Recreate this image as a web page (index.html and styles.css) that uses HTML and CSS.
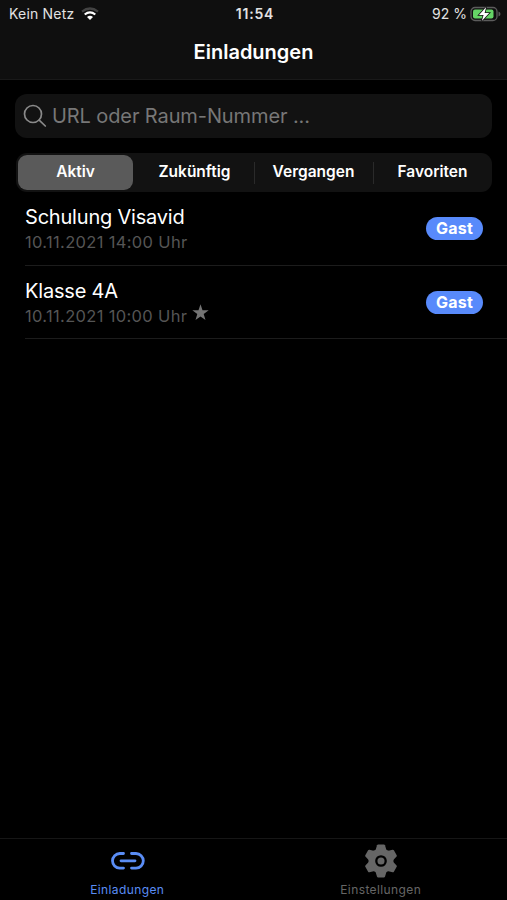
FILE: index.html
```html
<!DOCTYPE html>
<html lang="de">

<head>
  <meta charset="utf-8">
  <title>Einladungen</title>
  <link rel="stylesheet" href="styles.css">
</head>

<body>
  <header class="header">
    <div class="status-bar">
      <div class="status-left">
        <span class="carrier">Kein Netz</span>
        <svg class="wifi" width="18" height="14" viewBox="0 0 18 14">
          <path d="M1 4.700Q9-1.700 17 4.700" fill="none" stroke="#434343" stroke-width="2.200"/>
          <path d="M3.700 7.500Q9 3.200 14.300 7.500" fill="none" stroke="#fff" stroke-width="2.200"/>
          <path d="M6 10Q9 7.600 12 10L9 13z" fill="#fff"/>
        </svg>
      </div>
      <span class="clock">11:54</span>
      <div class="status-right">
        <span class="percent">92 %</span>
        <svg class="battery" width="31" height="16" viewBox="0 0 31 16">
          <rect x="1" y="1.500" width="26" height="13" rx="4" fill="none" stroke="#5c5c5c" stroke-width="1.300"/>
          <path d="M28.500 5.500q2 .6 2 2.500t-2 2.500z" fill="#5c5c5c"/>
          <rect x="3" y="3.500" width="20.500" height="9" rx="2" fill="#65d466"/>
          <path d="M16.200 1L9 9h4.600l-1.800 6L19.200 7h-4.600z" fill="#fff" stroke="#151515" stroke-width="1.600" paint-order="stroke"/>
        </svg>
      </div>
    </div>
    <h1>Einladungen</h1>
  </header>

  <main>
    <div class="search">
      <svg width="24" height="24" viewBox="0 0 24 24" fill="none" stroke="#8a8a8a" stroke-width="1.700" stroke-linecap="round">
        <circle cx="10" cy="10" r="8.500"/>
        <path d="M16.200 16.200L22.300 22"/>
      </svg>
      <span class="placeholder">URL oder Raum-Nummer ...</span>
    </div>

    <div class="segments">
      <div class="segment active">Aktiv</div>
      <div class="segment">Zukünftig</div>
      <div class="segment divided">Vergangen</div>
      <div class="segment divided">Favoriten</div>
    </div>

    <div class="list">
      <div class="item">
        <div class="info">
          <div class="name">Schulung Visavid</div>
          <div class="date"><span>10.11.2021 14:00 Uhr</span></div>
        </div>
        <span class="badge">Gast</span>
      </div>
      <div class="item">
        <div class="info">
          <div class="name">Klasse 4A</div>
          <div class="date">
            <span>10.11.2021 10:00 Uhr</span>
            <svg width="17" height="17" viewBox="0 0 17 17">
              <path d="M8.500.3l2 5.900 6.200.1-5 3.800 1.800 6-5-3.600-5 3.600 1.800-6-5-3.800 6.200-.1z" fill="#747474"/>
            </svg>
          </div>
        </div>
        <span class="badge">Gast</span>
      </div>
    </div>
  </main>

  <nav class="tabs">
    <div class="tab selected">
      <svg width="36" height="34" viewBox="0 0 36 34" fill="none" stroke="#5a8df5" stroke-width="2.800" stroke-linecap="round">
        <path d="M14.500 9.500H10.800a7.300 7.300 0 0 0 0 14.600h3.700M22.500 9.500H27a7.300 7.300 0 0 1 0 14.600h-4.500M12 16.800h14"/>
      </svg>
      <span>Einladungen</span>
    </div>
    <div class="tab">
      <svg width="34" height="34" viewBox="0 0 34 34">
        <g fill="#666">
          <circle cx="17" cy="17" r="12.500"/>
          <path id="tooth" d="M11.500 6.500L13 1.300Q13.300.5 14.200.5h5.600q.9 0 1.200.8l1.500 5.200z"/>
          <use href="#tooth" transform="rotate(60 17 17)"/>
          <use href="#tooth" transform="rotate(120 17 17)"/>
          <use href="#tooth" transform="rotate(180 17 17)"/>
          <use href="#tooth" transform="rotate(240 17 17)"/>
          <use href="#tooth" transform="rotate(300 17 17)"/>
        </g>
        <circle cx="17" cy="17" r="4.700" fill="none" stroke="#000" stroke-width="2.300"/>
      </svg>
      <span>Einstellungen</span>
    </div>
  </nav>
</body>

</html>
```
FILE: styles.css
```css
* {
  box-sizing: border-box;
}

body {
  display: flex;
  flex-direction: column;
  height: 900px;
  margin: 0;
  background: #000;
  color: #fff;
  font-family: Inter, sans-serif;
  overflow: hidden;
  white-space: nowrap;
}

svg {
  display: block;
  flex: none;
}

.header {
  height: 80px;
  background: #0f0f0f;
  border-bottom: 1px solid #191919;
}

.status-bar {
  display: grid;
  grid-template-columns: 1fr auto 1fr;
  align-items: center;
  height: 27px;
  padding: 0 6px 0 9px;
  font-size: 14px;
  color: #e2e2e2;
}

.status-left,
.status-right {
  display: flex;
  align-items: center;
}

.status-left {
  gap: 7px;
}

.status-right {
  justify-content: flex-end;
  gap: 3px;
}

.carrier {
  letter-spacing: 0.2px;
}

.clock {
  font-weight: 600;
  letter-spacing: 0.8px;
}

h1 {
  margin: 0;
  font-size: 20px;
  font-weight: 600;
  line-height: 50px;
  text-align: center;
}

main {
  flex: 1;
  padding-top: 14px;
}

.search {
  display: flex;
  align-items: center;
  gap: 5px;
  height: 44px;
  margin: 0 15px;
  padding-left: 8px;
  border-radius: 12px;
  background: #121212;
  color: #777;
  font-size: 20px;
  letter-spacing: -0.1px;
}

.segments {
  display: grid;
  grid-template-columns: repeat(4, 1fr);
  height: 39px;
  margin: 15px 15px 0 16px;
  padding: 2px 0;
  border-radius: 11px;
  background: #121212;
  font-size: 15.5px;
  font-weight: 600;
  line-height: 34px;
  text-align: center;
}

.segment.active {
  margin: 0 2px;
  border-radius: 9px;
  background: #5a5a5a;
}

.segment.divided {
  background: linear-gradient(#2a2a2a, #2a2a2a) 0 50% / 1px 22px no-repeat;
}

.item {
  display: flex;
  justify-content: space-between;
  height: 73.5px;
  margin-left: 25px;
  padding: 12px 24px 0 0;
  border-bottom: 1px solid #1c1c1c;
}

.name {
  height: 26px;
  font-size: 20px;
  line-height: 26px;
  letter-spacing: -0.2px;
}

.date {
  display: flex;
  gap: 5px;
  height: 24px;
  color: #555;
  font-size: 16.5px;
  line-height: 24px;
  letter-spacing: 0.33px;
}

.badge {
  width: 57px;
  height: 23px;
  margin-top: 13px;
  border-radius: 12px;
  background: #588afb;
  font-size: 16px;
  font-weight: 700;
  line-height: 23px;
  letter-spacing: 0.2px;
  text-align: center;
}

.tabs {
  display: grid;
  grid-template-columns: 1fr 1fr;
  height: 62px;
  border-top: 1px solid #161616;
}

.tab {
  display: flex;
  flex-direction: column;
  align-items: center;
  padding: 5px 0 0 1px;
  color: #666;
  font-size: 12px;
  line-height: 23px;
  letter-spacing: 0.4px;
}

.tab.selected {
  color: #5a8df5;
}
```
